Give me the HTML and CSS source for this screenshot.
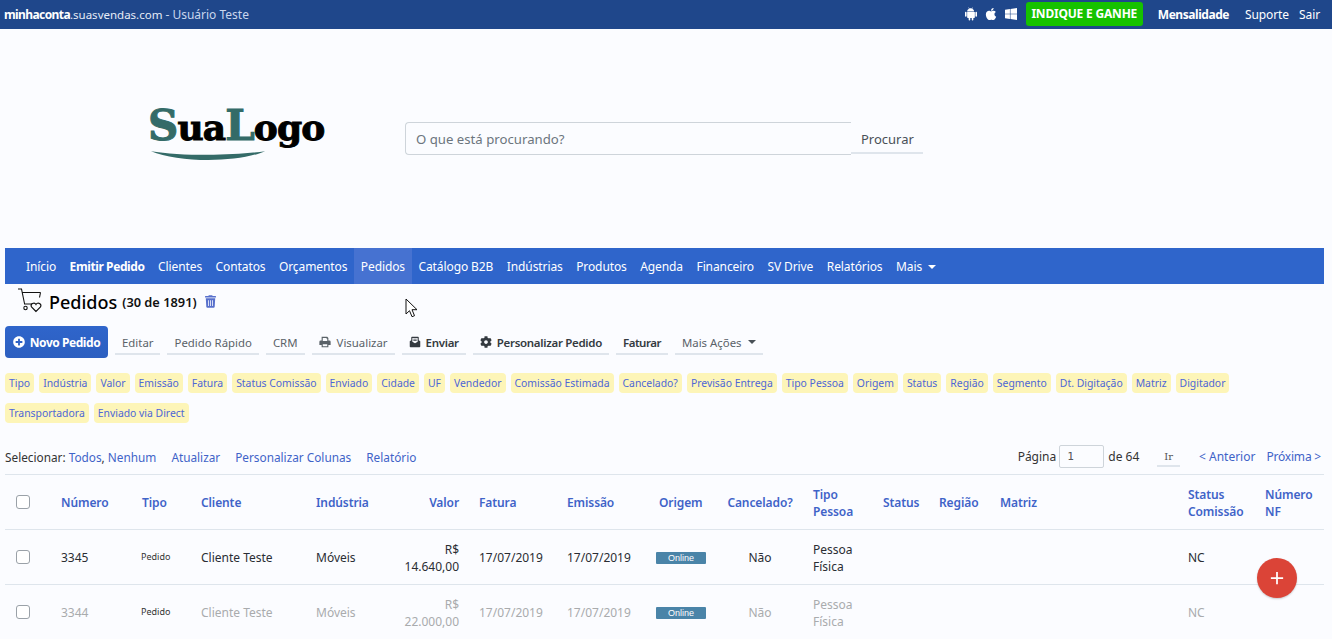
FILE: index.html
```html
<!DOCTYPE html>
<html lang="pt-BR">
<head>
<meta charset="utf-8">
<title>Pedidos</title>
<link rel="stylesheet" href="styles.css">
</head>
<body>
<header class="topbar">
  <div class="top-left"><b class="acct">minhaconta</b>.suasvendas.com <span class="user">- Usuário Teste</span></div>
  <div class="top-right">
    <svg class="os" viewBox="0 0 448 512"><path d="M80 180h288v200a28 28 0 0 1-28 28h-28v64a30 30 0 0 1-60 0v-64h-56v64a30 30 0 0 1-60 0v-64h-28a28 28 0 0 1-28-28zM0 200a30 30 0 0 1 60 0v130a30 30 0 0 1-60 0zM388 200a30 30 0 0 1 60 0v130a30 30 0 0 1-60 0zM80 160c2-50 34-84 70-100l-26-46 12-6 28 46c30-12 62-12 92 0l28-46 12 6-26 46c36 16 68 50 70 100z"/></svg>
    <svg class="os" viewBox="0 0 384 512"><path d="M318.7 268.7c-.2-36.7 16.4-64.4 50-84.8-18.8-26.9-47.2-41.7-84.7-44.6-35.5-2.8-74.3 20.7-88.5 20.7-15 0-49.4-19.7-76.4-19.7C63.3 141.2 4 184.8 4 273.5q0 39.3 14.4 81.2c12.8 36.7 59 126.7 107.2 125.2 25.2-.6 43-17.9 75.8-17.9 31.8 0 48.3 17.9 76.4 17.9 48.6-.7 90.4-82.5 102.6-119.3-65.2-30.7-61.7-90-61.7-91.9zm-56.6-164.2c27.3-32.4 24.8-61.9 24-72.5-24.1 1.4-52 16.4-67.9 34.9-17.5 19.8-27.8 44.3-25.6 71.9 26.1 2 49.9-11.4 69.5-34.3z"/></svg>
    <svg class="os" viewBox="0 0 448 512"><path d="M0 93.7l183.6-25.3v177.4H0V93.7zm0 324.6l183.6 25.3V268.4H0v149.9zm203.8 28L448 480V268.4H203.8v177.9zm0-380.6v180.1H448V32L203.8 65.7z"/></svg>
    <a class="promo">INDIQUE E GANHE</a>
    <a class="top-strong">Mensalidade</a>
    <a class="top-link">Suporte</a>
    <a class="top-link">Sair</a>
  </div>
</header>

<section class="brand">
  <div class="logo">
    <div class="logo-word"><span class="teal">S</span>ua<span class="teal">L</span>ogo</div>
    <svg class="swoosh" viewBox="0 0 120 12"><path d="M0 1C30 6 85 6 117 1 90 13 28 13 0 1z"/></svg>
  </div>
  <form class="search">
    <input class="search-input" placeholder="O que está procurando?">
    <span class="search-btn">Procurar</span>
  </form>
</section>

<nav class="nav">
  <a>Início</a><a class="strong">Emitir Pedido</a><a>Clientes</a><a>Contatos</a><a>Orçamentos</a><a class="active">Pedidos</a><a>Catálogo B2B</a><a>Indústrias</a><a>Produtos</a><a>Agenda</a><a>Financeiro</a><a>SV Drive</a><a>Relatórios</a><a>Mais <i class="caret"></i></a>
</nav>

<main class="content">
  <div class="title-row">
    <svg class="cart" viewBox="0 0 26 26" fill="none" stroke="#111" stroke-width="1.1"><path d="M1 2h3.5l3 14.5M5 5.5h18.5M23.5 5.5l-1 5M7 17h8"/><circle cx="8.5" cy="21" r="1.7"/><path d="M19 24.5l-4.5-4.5a2.5 2.5 0 0 1 4.5-2.5 2.5 2.5 0 0 1 4.5 2.5z"/></svg>
    <h1>Pedidos</h1>
    <span class="count">(30 de 1891)</span>
    <svg class="trash" viewBox="0 0 448 512"><path fill-rule="evenodd" d="M432 32H312l-9.4-18.7A24 24 0 0 0 281.1 0H166.8a23.72 23.72 0 0 0-21.4 13.3L136 32H16A16 16 0 0 0 0 48v32a16 16 0 0 0 16 16h416a16 16 0 0 0 16-16V48a16 16 0 0 0-16-16zM53.2 467a48 48 0 0 0 47.9 45h245.8a48 48 0 0 0 47.9-45L416 128H32zM128 200v240h32V200zM208 200v240h32V200zM288 200v240h32V200z"/></svg>
  </div>

  <div class="actions">
    <a class="primary"><svg class="ic" viewBox="0 0 512 512"><path d="M256 8C119 8 8 119 8 256s111 248 248 248 248-111 248-248S393 8 256 8zm144 276c0 6.6-5.4 12-12 12h-92v92c0 6.6-5.4 12-12 12h-56c-6.6 0-12-5.4-12-12v-92h-92c-6.6 0-12-5.4-12-12v-56c0-6.6 5.4-12 12-12h92v-92c0-6.6 5.4-12 12-12h56c6.6 0 12 5.4 12 12v92h92c6.6 0 12 5.4 12 12v56z"/></svg>Novo Pedido</a>
    <a class="act">Editar</a>
    <a class="act">Pedido Rápido</a>
    <a class="act">CRM</a>
    <a class="act"><svg class="ic" viewBox="0 0 512 512"><path fill-rule="evenodd" d="M112 32h240l48 48v112h40a56 56 0 0 1 56 56v136h-96v96H112v-96H16V248a56 56 0 0 1 56-56h40zM160 80v128h192V112h-32V80zM160 352v80h192v-80z"/></svg>Visualizar</a>
    <a class="act bold"><svg class="ic" viewBox="0 0 512 512"><path fill-rule="evenodd" d="M96 176V64a32 32 0 0 1 32-32h256a32 32 0 0 1 32 32v112l64 48v224a32 32 0 0 1-32 32H64a32 32 0 0 1-32-32V224zM144 80v160l112 70 112-70V80zM184 120h144v32H184zM184 184h144v32H184z"/></svg>Enviar</a>
    <a class="act bold"><svg class="ic" viewBox="0 0 512 512"><path d="M487.4 315.7l-42.6-24.6c4.3-23.2 4.3-47 0-70.2l42.6-24.6c4.9-2.8 7.1-8.6 5.5-14-11.1-35.6-30-67.8-54.7-94.6-3.8-4.1-10-5.1-14.8-2.3L380.8 110c-17.9-15.4-38.5-27.3-60.8-35.1V25.8c0-5.6-3.9-10.5-9.4-11.7-36.7-8.2-74.3-7.8-109.2 0-5.5 1.2-9.4 6.1-9.4 11.7V75c-22.2 7.9-42.8 19.8-60.8 35.1L88.7 85.5c-4.9-2.8-11-1.9-14.8 2.3-24.7 26.7-43.6 58.9-54.7 94.6-1.7 5.4.6 11.2 5.5 14L67.3 221c-4.3 23.2-4.3 47 0 70.2l-42.6 24.6c-4.9 2.8-7.1 8.6-5.5 14 11.1 35.6 30 67.8 54.7 94.6 3.8 4.1 10 5.1 14.8 2.3l42.6-24.6c17.9 15.4 38.5 27.3 60.8 35.1v49.2c0 5.6 3.9 10.5 9.4 11.7 36.7 8.2 74.3 7.8 109.2 0 5.5-1.2 9.4-6.1 9.4-11.7v-49.2c22.2-7.9 42.8-19.8 60.8-35.1l42.6 24.6c4.9 2.8 11 1.9 14.8-2.3 24.7-26.7 43.6-58.9 54.7-94.6 1.5-5.5-.7-11.3-5.6-14.1zM256 336c-44.1 0-80-35.9-80-80s35.9-80 80-80 80 35.9 80 80-35.9 80-80 80z"/></svg>Personalizar Pedido</a>
    <a class="act bold tight">Faturar</a>
    <a class="act">Mais Ações <i class="caret dark"></i></a>
  </div>

  <div class="chips">
    <span>Tipo</span><span>Indústria</span><span>Valor</span><span>Emissão</span><span>Fatura</span><span>Status Comissão</span><span>Enviado</span><span>Cidade</span><span>UF</span><span>Vendedor</span><span>Comissão Estimada</span><span>Cancelado?</span><span>Previsão Entrega</span><span>Tipo Pessoa</span><span>Origem</span><span>Status</span><span>Região</span><span>Segmento</span><span>Dt. Digitação</span><span>Matriz</span><span>Digitador</span><span>Transportadora</span><span>Enviado via Direct</span>
  </div>

  <div class="toolbar">
    <div class="tool-left">
      <span>Selecionar: <a>Todos</a>, <a>Nenhum</a></span>
      <a>Atualizar</a>
      <a>Personalizar Colunas</a>
      <a>Relatório</a>
    </div>
    <div class="tool-right">
      <span>Página</span>
      <input class="page-input" value="1">
      <span>de 64</span>
      <span class="go">Ir</span>
      <a>&lt; Anterior</a>
      <a>Próxima &gt;</a>
    </div>
  </div>

  <table class="grid">
    <colgroup>
      <col class="c-check"><col class="c-num"><col class="c-type"><col class="c-client"><col class="c-ind"><col class="c-val"><col class="c-date"><col class="c-date2"><col class="c-orig"><col class="c-canc"><col class="c-pess"><col class="c-stat"><col class="c-reg"><col class="c-mat"><col class="c-com"><col class="c-nf">
    </colgroup>
    <thead>
      <tr>
        <th><i class="check"></i></th><th>Número</th><th>Tipo</th><th>Cliente</th><th>Indústria</th><th class="right">Valor</th><th>Fatura</th><th>Emissão</th><th>Origem</th><th class="center">Cancelado?</th><th>Tipo Pessoa</th><th>Status</th><th>Região</th><th>Matriz</th><th>Status Comissão</th><th>Número NF</th>
      </tr>
    </thead>
    <tbody>
      <tr>
        <td><i class="check"></i></td><td>3345</td><td><small class="kind">Pedido</small></td><td>Cliente Teste</td><td>Móveis</td><td class="right">R$ 14.640,00</td><td>17/07/2019</td><td>17/07/2019</td><td><span class="badge">Online</span></td><td class="center">Não</td><td>Pessoa Física</td><td></td><td></td><td></td><td>NC</td><td></td>
      </tr>
      <tr class="muted">
        <td><i class="check"></i></td><td>3344</td><td><small class="kind">Pedido</small></td><td>Cliente Teste</td><td>Móveis</td><td class="right">R$ 22.000,00</td><td>17/07/2019</td><td>17/07/2019</td><td><span class="badge">Online</span></td><td class="center">Não</td><td>Pessoa Física</td><td></td><td></td><td></td><td>NC</td><td></td>
      </tr>
    </tbody>
  </table>
</main>

<svg class="cursor" viewBox="0 0 13 20"><path d="M1 1v15l3.5-3.3 2.5 6 2.5-1-2.5-6h5z" fill="#fff" stroke="#111" stroke-width="1"/></svg>
<a class="fab"><svg viewBox="0 0 16 16"><path d="M7 1h2v6h6v2H9v6H7V9H1V7h6z"/></svg></a>
</body>
</html>
```

FILE: styles.css
```css
* { box-sizing: border-box; }
html, body { margin: 0; height: 639px; overflow: hidden; }
body {
  background: #fbfcff;
  color: #2a2d33;
  font-family: "Noto Sans", "Open Sans", sans-serif;
  font-size: 12px;
  position: relative;
}
a { color: inherit; text-decoration: none; }

.topbar {
  height: 29px;
  background: #1f478b;
  color: #fff;
  display: flex;
  justify-content: space-between;
  align-items: center;
  padding: 0 12px 1px 4px;
}
.top-left { color: #e6ecf7; font-size: 11.5px; }
.acct { color: #fff; font-weight: 700; letter-spacing: -0.6px; font-size: 12px; }
.user { color: #c9d6ee; font-size: 12px; }
.top-right { display: flex; align-items: center; }
.os { height: 14px; width: 12px; fill: #fff; margin-right: 8px; }
.os:nth-child(3) { margin-right: 9px; }
.promo {
  background: #16c200;
  border-radius: 3px;
  font-weight: 700;
  height: 24px;
  line-height: 24px;
  font-size: 12px;
  letter-spacing: -0.2px;
  width: 117px;
  text-align: center;
  white-space: nowrap;
}
.top-strong { font-weight: 700; margin-left: 15px; font-size: 12px; letter-spacing: -0.45px; }
.top-link { margin-left: 16px; letter-spacing: -0.1px; }
.top-link:last-child { margin-left: 10px; }

.brand {
  height: 219px;
  display: flex;
  align-items: center;
  padding: 0 0 0 148px;
}
.logo { width: 257px; height: 50px; position: relative; margin-top: -22px; }
.logo-word {
  font-family: "DejaVu Serif", serif;
  font-weight: 700;
  font-size: 36px;
  line-height: 46px;
  letter-spacing: -0.9px;
  color: #000;
  -webkit-text-stroke: 1px currentColor;
  white-space: nowrap;
}
.teal { color: #346b68; font-size: 42px; }
.swoosh { position: absolute; left: 3px; top: 47px; width: 117px; height: 12px; fill: #346b68; }
.search { display: flex; align-items: center; }
.search-input {
  width: 446px;
  height: 33px;
  border: 1px solid #ced4da;
  border-right: 0;
  border-radius: 4px 0 0 4px;
  background: #fbfcff;
  padding: 0 10px;
  font: 13.2px "Noto Sans", sans-serif;
}
.search-input::placeholder { color: #6c757d; opacity: 1; }
.search-btn {
  color: #495057;
  font-size: 13px;
  height: 29px;
  line-height: 27px;
  padding: 1px 10px 0;
  border-bottom: 2px solid #dfe5ec;
  width: 72px;
  text-align: center;
  margin-top: 1px;
}

.nav {
  margin: 0 8px 0 5px;
  height: 36px;
  background: #2f65cb;
  color: #fff;
  display: flex;
  padding-left: 14.25px;
}
.nav a { padding: 1px 6.75px 0; line-height: 36px; white-space: nowrap; letter-spacing: -0.1px; }
.nav .strong { font-weight: 700; letter-spacing: -0.4px; }
.nav .active { background: #4672d1; }
.caret {
  display: inline-block;
  border-top: 4px solid currentColor;
  border-left: 4px solid transparent;
  border-right: 4px solid transparent;
  margin-left: 3px;
  vertical-align: 2px;
}
.caret.dark { color: #495057; }

.content { padding: 0 8px 0 5px; }
.title-row { height: 42px; display: flex; align-items: center; padding: 0 0 7px 12px; }
.cart { width: 26px; height: 26px; margin: -4px 6px 0 0; }
h1 { margin: 1px 0 0; font-size: 18px; font-weight: 500; color: #000; line-height: 1; }
.count { font-size: 12.8px; font-weight: 600; color: #111; margin-left: 5px; }
.trash { width: 11px; height: 13px; fill: #5870cc; margin-left: 8px; }

.actions { display: flex; align-items: center; height: 32px; gap: 7px; }
.ic { width: 12px; height: 12px; fill: currentColor; margin-right: 5px; flex: none; }
.act .ic { margin-right: 6px; }
.act.bold .ic { margin-right: 5px; }
.primary {
  background: linear-gradient(#2f65cb, #2c5fc0);
  color: #fff;
  font-weight: 700;
  letter-spacing: -0.45px;
  border-radius: 4px;
  height: 32px;
  width: 103px;
  display: flex;
  align-items: center;
  justify-content: center;
}
.act {
  display: flex;
  align-items: center;
  height: 26px;
  padding: 2px 7px 0;
  border-bottom: 2px solid #dfe5ec;
  color: #5a6268;
  white-space: nowrap;
  font-size: 11.4px;
}
.act.bold { color: #343a40; font-weight: 600; letter-spacing: -0.3px; font-size: 11.5px; }
.act.tight { letter-spacing: -0.5px; }
.act .caret { margin-left: 6px; }

.chips { display: flex; flex-wrap: wrap; gap: 10px 5px; margin-top: 15px; height: 50px; max-width: 1235px; }
.chips span {
  background: #fdf5b8;
  color: #4d66d6;
  border-radius: 4px;
  height: 20px;
  line-height: 20px;
  padding: 0 4px;
  font-size: 10.4px;
  white-space: nowrap;
}

.toolbar {
  display: flex;
  justify-content: space-between;
  align-items: center;
  height: 34px;
  padding-bottom: 1px;
  margin-top: 17px;
  color: #333;
}
.toolbar a { color: #3f63c8; }
.tool-left, .tool-right { display: flex; align-items: center; }
.tool-left { font-size: 11.8px; }
.tool-left > a { margin-left: 15px; }
.tool-right { padding-right: 3px; }
.page-input {
  width: 45px;
  height: 23px;
  margin: 0 4px 0 3px;
  border: 1px solid #ced4da;
  border-radius: 2px;
  background: #fbfcff;
  padding: 0 7px;
  font: 11px "DejaVu Sans Mono", monospace;
  color: #555;
}
.go {
  font: 10px "DejaVu Serif", serif;
  margin: 2px 19px 0 18px;
  padding: 3px 7px;
  border-bottom: 2px solid #dfe5ec;
  color: #555;
}
.tool-right > a:last-child { margin-left: 11px; letter-spacing: -0.2px; }

.grid { width: 1319px; table-layout: fixed; border-collapse: collapse; }
.grid th, .grid td {
  border-top: 1px solid #dee5ec;
  padding: 1px 12px 0 8px;
  text-align: left;
  line-height: 17px;
}
.grid th { height: 55px; color: #3f63c8; font-weight: 600; letter-spacing: -0.1px; }
.grid td { height: 55px; }
.grid .right { text-align: right; }
.grid .center { text-align: center; }
.c-check { width: 48px; } .c-num { width: 81px; } .c-type { width: 59px; } .c-client { width: 115px; }
.c-ind { width: 81px; } .c-val { width: 82px; } .c-date { width: 88px; } .c-date2 { width: 92px; } .c-orig { width: 68px; }
.c-canc { width: 86px; } .c-pess { width: 70px; } .c-stat { width: 56px; } .c-reg { width: 61px; }
.c-mat { width: 188px; } .c-com { width: 77px; } .c-nf { width: 67px; }
.grid th:first-child, .grid td:first-child { padding: 0 12px 0 11px; }
.check {
  display: block;
  width: 14px;
  height: 14px;
  border: 1px solid #9aa1a8;
  border-radius: 3px;
  background: #fff;
}
.kind { display: block; font-size: 9px; color: #333; margin: 0 0 2px -1px; }
.badge {
  display: block;
  width: 50px;
  height: 12px;
  margin-left: -3px;
  background: #4a84a8;
  color: #fff;
  font: 9px/12px "Liberation Sans", sans-serif;
  text-align: center;
  border-radius: 1px;
}
.muted td { color: #a9abad; }
.muted .kind { color: #333; }

.cursor { position: absolute; left: 405px; top: 298px; width: 13px; height: 20px; }
.fab {
  position: absolute;
  left: 1257px;
  top: 558px;
  width: 40px;
  height: 40px;
  border-radius: 50%;
  background: #db4437;
  display: flex;
  align-items: center;
  justify-content: center;
  box-shadow: 0 1px 2px rgba(0,0,0,.2);
}
.fab svg { width: 14px; height: 14px; fill: #fff; }
```
